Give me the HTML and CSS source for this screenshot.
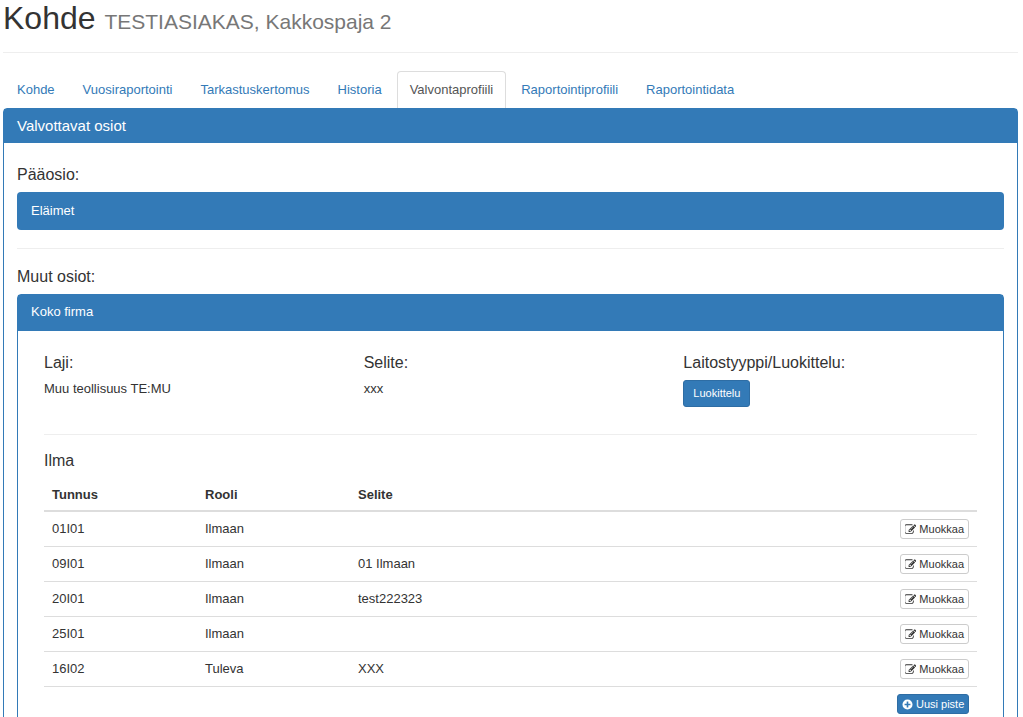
FILE: index.html
```html
<!DOCTYPE html>
<html lang="fi">
<head>
<meta charset="utf-8">
<title>Kohde</title>
<link rel="stylesheet" href="styles.css">
</head>
<body>
<svg class="defs" aria-hidden="true">
  <symbol id="edit" viewBox="100 200 1640 1400"><path fill="currentColor" d="M888 1184l116-116-152-152-116 116v56h96v96h56zm440-720q-16-16-33 1l-350 350q-17 17-1 33t33-1l350-350q17-17 1-33zm80 594v190q0 119-84.500 203.500t-203.500 84.500h-832q-119 0-203.500-84.500t-84.500-203.500v-832q0-119 84.500-203.500t203.500-84.500h832q63 0 117 25 15 7 18 23 3 17-9 29l-49 49q-14 14-32 8-23-6-45-6h-832q-66 0-113 47t-47 113v832q0 66 47 113t113 47h832q66 0 113-47t47-113v-126q0-13 9-22l64-64q15-15 35-7t20 29zm-96-738l288 288-672 672h-288v-288zm444 132l-92 92-288-288 92-92q28-28 68-28t68 28l152 152q28 28 28 68t-28 68z"/></symbol>
  <symbol id="plus" viewBox="0 0 12 12"><path fill="currentColor" fill-rule="evenodd" d="M6 .5a5.500 5.500 0 1 1 0 11a5.500 5.500 0 0 1 0-11zM5.100 2.800v2.300H2.800v1.800h2.300v2.300h1.800V6.900h2.300V5.100H6.900V2.800z"/></symbol>
</svg>
<header class="page-header"><h1>Kohde <small>TESTIASIAKAS, Kakkospaja 2</small></h1></header>
<nav class="tabs">
  <a href="#">Kohde</a>
  <a href="#">Vuosiraportointi</a>
  <a href="#">Tarkastuskertomus</a>
  <a href="#">Historia</a>
  <a href="#" class="active" aria-current="page">Valvontaprofiili</a>
  <a href="#">Raportointiprofiili</a>
  <a href="#">Raportointidata</a>
</nav>
<main class="panel">
  <h2 class="panel-heading panel-title">Valvottavat osiot</h2>
  <div class="panel-body">
    <h3>Pääosio:</h3>
    <a href="#" class="section-link">Eläimet</a>
    <hr>
    <h3>Muut osiot:</h3>
    <section class="panel">
      <div class="panel-heading section-title">Koko firma</div>
      <div class="section-body">
        <div class="details">
          <div><h3>Laji:</h3><p>Muu teollisuus TE:MU</p></div>
          <div><h3>Selite:</h3><p>xxx</p></div>
          <div><h3>Laitostyyppi/Luokittelu:</h3><button type="button" class="btn primary">Luokittelu</button></div>
        </div>
        <hr>
        <h3 class="table-title">Ilma</h3>
        <table>
          <thead><tr><th class="code">Tunnus</th><th class="role">Rooli</th><th>Selite</th><th class="action"></th></tr></thead>
          <tbody>
            <tr><td>01I01</td><td>Ilmaan</td><td></td><td class="action"><button type="button" class="btn small"><svg><use href="#edit"/></svg>Muokkaa</button></td></tr>
            <tr><td>09I01</td><td>Ilmaan</td><td>01 Ilmaan</td><td class="action"><button type="button" class="btn small"><svg><use href="#edit"/></svg>Muokkaa</button></td></tr>
            <tr><td>20I01</td><td>Ilmaan</td><td>test222323</td><td class="action"><button type="button" class="btn small"><svg><use href="#edit"/></svg>Muokkaa</button></td></tr>
            <tr><td>25I01</td><td>Ilmaan</td><td></td><td class="action"><button type="button" class="btn small"><svg><use href="#edit"/></svg>Muokkaa</button></td></tr>
            <tr><td>16I02</td><td>Tuleva</td><td>XXX</td><td class="action"><button type="button" class="btn small"><svg><use href="#edit"/></svg>Muokkaa</button></td></tr>
            <tr><td></td><td></td><td></td><td class="action"><button type="button" class="btn small primary"><svg><use href="#plus"/></svg>Uusi piste</button></td></tr>
          </tbody>
        </table>
      </div>
    </section>
  </div>
</main>
</body>
</html>
```
FILE: styles.css
```css
* { box-sizing: border-box; }
body {
  margin: 0;
  padding: 0 5px 0 3px;
  height: 100vh;
  overflow: hidden;
  background: #fff;
  color: #333;
  font: 13px/18px "Liberation Sans", Arial, sans-serif;
}
.defs { position: absolute; width: 0; height: 0; }
h1, h2, h3, p { margin: 0; font-weight: 400; }
a { color: #337ab7; text-decoration: none; }
hr { height: 1px; margin: 18px 0; border: 0; background: #eee; }
.page-header { height: 53px; border-bottom: 1px solid #eee; }
h1 { font-size: 32px; line-height: 36px; }
h1 small { color: #777; font-size: 21px; }
h3 { margin-bottom: 8px; font-size: 16px; line-height: 19px; }
.tabs { display: flex; gap: 2px; padding: 18px 0 0 1px; }
.tabs a { height: 37px; padding: 9px 12px; border: 1px solid transparent; border-bottom: 0; border-radius: 4px 4px 0 0; }
.tabs .active { color: #555; border-color: #ddd; }
.panel { border: 1px solid #337ab7; border-radius: 4px; }
.panel-heading { background: #337ab7; color: #fff; }
.panel-title { padding: 8px 13px; font-size: 15px; line-height: 18px; }
.panel-body { padding: 22px 13px 14px; }
.section-link { display: block; padding: 10px 14px; border-radius: 4px; background: #337ab7; color: #fff; }
.section-title { padding: 8px 13px 10px; }
.section-body { padding: 22px 26px 14px; }
.section-body > hr { margin-bottom: 16px; }
.table-title { margin-bottom: 10px; }
.details { display: grid; grid-template-columns: repeat(3, 1fr); min-height: 63px; margin-right: -26px; }
.btn {
  display: inline-flex;
  align-items: center;
  padding: 4px 9px;
  border: 1px solid #ccc;
  border-radius: 3px;
  background: #fff;
  color: #333;
  font: 11px/17px "Liberation Sans", Arial, sans-serif;
  white-space: nowrap;
}
.btn.small { gap: 3px; padding: 0 4px; line-height: 18px; }
.btn.primary { border-color: #2e6da4; background: #337ab7; color: #fff; }
.btn svg { width: 11px; height: 11px; }
table { width: 100%; border-collapse: separate; border-spacing: 0; table-layout: fixed; }
th, td { padding: 8px; text-align: left; vertical-align: top; }
th { padding: 6px 8px; border-bottom: 2px solid #ddd; }
td { border-bottom: 1px solid #ddd; }
.code { width: 153px; }
.role { width: 153px; }
.action { width: 84px; padding: 7px 8px 7px 4px; text-align: right; line-height: 1; }
```
